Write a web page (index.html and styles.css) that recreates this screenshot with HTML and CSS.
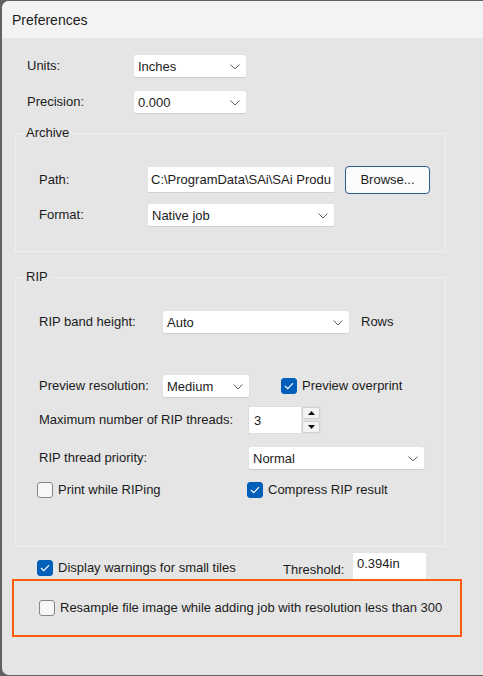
FILE: index.html
```html
<!DOCTYPE html>
<html lang="en">
<head>
	<meta charset="UTF-8">
	<meta name="viewport" content="width=device-width, initial-scale=1.0">
	<title>Preferences</title>

	<link rel="stylesheet" href="styles.css">

</head>
<body>

	<div class="prefs-window">
		<div class="prefs-titlebar">Preferences</div>

		<form class="prefs-content">

			<div class="prefs-top">
				<div class="prefs-row">
					<label class="prefs-label prefs-label-top">Units:</label>
					<div class="prefs-combo prefs-w-114"><span>Inches</span><svg width="10" height="6" viewBox="0 0 10 6"><polyline points="0.5,0.5 5,5 9.5,0.5" fill="none" stroke="#606060" stroke-width="1"/></svg></div>
				</div>
				<div class="prefs-row">
					<label class="prefs-label prefs-label-top">Precision:</label>
					<div class="prefs-combo prefs-w-114"><span>0.000</span><svg width="10" height="6" viewBox="0 0 10 6"><polyline points="0.5,0.5 5,5 9.5,0.5" fill="none" stroke="#606060" stroke-width="1"/></svg></div>
				</div>
			</div>

			<fieldset class="prefs-group prefs-group-archive">
				<legend>Archive</legend>
				<div class="prefs-group-body">
					<div class="prefs-row prefs-row-27">
						<label class="prefs-label prefs-label-archive">Path:</label>
						<div class="prefs-text prefs-w-188"><span class="prefs-clip">C:\ProgramData\SAi\SAi Production</span></div>
						<button type="button" class="prefs-button">Browse...</button>
					</div>
					<div class="prefs-row prefs-gap-10">
						<label class="prefs-label prefs-label-archive">Format:</label>
						<div class="prefs-combo prefs-w-188"><span>Native job</span><svg width="10" height="6" viewBox="0 0 10 6"><polyline points="0.5,0.5 5,5 9.5,0.5" fill="none" stroke="#606060" stroke-width="1"/></svg></div>
					</div>
				</div>
			</fieldset>

			<fieldset class="prefs-group prefs-group-rip">
				<legend>RIP</legend>
				<div class="prefs-group-body">
					<div class="prefs-row">
						<label class="prefs-label prefs-label-rip">RIP band height:</label>
						<div class="prefs-combo prefs-w-188"><span>Auto</span><svg width="10" height="6" viewBox="0 0 10 6"><polyline points="0.5,0.5 5,5 9.5,0.5" fill="none" stroke="#606060" stroke-width="1"/></svg></div>
						<span class="prefs-unit">Rows</span>
					</div>
					<div class="prefs-row prefs-gap-40">
						<label class="prefs-label prefs-label-rip">Preview resolution:</label>
						<div class="prefs-combo prefs-w-88"><span>Medium</span><svg width="10" height="6" viewBox="0 0 10 6"><polyline points="0.5,0.5 5,5 9.5,0.5" fill="none" stroke="#606060" stroke-width="1"/></svg></div>
						<span class="prefs-check prefs-check-overprint"><span class="prefs-box is-checked"><svg width="10" height="8" viewBox="0 0 10 8"><polyline points="1,4 3.8,6.6 9,1.2" fill="none" stroke="#fff" stroke-width="1.2"/></svg></span>Preview overprint</span>
					</div>
					<div class="prefs-row prefs-row-28 prefs-gap-8">
						<label class="prefs-label prefs-label-wide">Maximum number of RIP threads:</label>
						<div class="prefs-spin">
							<div class="prefs-spin-value">3</div>
							<div class="prefs-spin-buttons">
								<span class="prefs-spin-btn"><svg width="7" height="4" viewBox="0 0 7 4"><polygon points="3.5,0 7,4 0,4" fill="#111"/></svg></span>
								<span class="prefs-spin-btn"><svg width="7" height="4" viewBox="0 0 7 4"><polygon points="0,0 7,0 3.5,4" fill="#111"/></svg></span>
							</div>
						</div>
					</div>
					<div class="prefs-row prefs-gap-12">
						<label class="prefs-label prefs-label-wide">RIP thread priority:</label>
						<div class="prefs-combo prefs-w-177"><span>Normal</span><svg width="10" height="6" viewBox="0 0 10 6"><polyline points="0.5,0.5 5,5 9.5,0.5" fill="none" stroke="#606060" stroke-width="1"/></svg></div>
					</div>
					<div class="prefs-row prefs-row-16 prefs-gap-12 prefs-checks">
						<span class="prefs-check prefs-check-col"><span class="prefs-box"></span>Print while RIPing</span>
						<span class="prefs-check"><span class="prefs-box is-checked"><svg width="10" height="8" viewBox="0 0 10 8"><polyline points="1,4 3.8,6.6 9,1.2" fill="none" stroke="#fff" stroke-width="1.2"/></svg></span>Compress RIP result</span>
					</div>
				</div>
			</fieldset>

			<div class="prefs-row prefs-row-26 prefs-tiles">
				<span class="prefs-check prefs-check-tiles"><span class="prefs-box is-checked"><svg width="10" height="8" viewBox="0 0 10 8"><polyline points="1,4 3.8,6.6 9,1.2" fill="none" stroke="#fff" stroke-width="1.2"/></svg></span>Display warnings for small tiles</span>
				<span class="prefs-threshold-label">Threshold:</span>
				<div class="prefs-text prefs-threshold">0.394in</div>
			</div>

			<div class="prefs-highlight">
				<span class="prefs-check"><span class="prefs-box"></span>Resample file image while adding job with resolution less than 300</span>
			</div>

		</form>
	</div>

</body>
</html>
```

FILE: styles.css
```css
body {
	margin: 0;
	background-color: #626262;
	font-family: "Liberation Sans", Arial, sans-serif;
	font-size: 13px;
	line-height: 16px;
	color: #1b1b1b;
}
.prefs-window {
	margin: 1px 0 0 2px;
	height: 674px;
	background-color: #e5e5e5;
	border-radius: 7px 0 0 7px;
	overflow: hidden;
}
.prefs-titlebar {
	display: flex;
	align-items: center;
	height: 37px;
	padding-left: 10px;
	background-color: #f3f3f3;
	font-size: 14px;
}
.prefs-content {
	padding: 16px 0 0 13px;
}
.prefs-top {
	padding-left: 12px;
}

/* rows */
.prefs-row {
	display: flex;
	align-items: center;
	height: 24px;
}
.prefs-row + .prefs-row {
	margin-top: 12px;
}
.prefs-row.prefs-gap-8 { margin-top: 8px; }
.prefs-row.prefs-gap-10 { margin-top: 10px; }
.prefs-row.prefs-gap-12 { margin-top: 12px; }
.prefs-row.prefs-gap-40 { margin-top: 40px; }
.prefs-row-16 { height: 16px; }
.prefs-row-26 { height: 26px; }
.prefs-row-27 { height: 27px; }
.prefs-row-28 { height: 28px; }

.prefs-label-top { width: 106px; }
.prefs-label-archive { width: 108px; }
.prefs-label-rip { width: 123px; }
.prefs-label-wide { width: 209px; }

.prefs-w-88 { width: 88px; }
.prefs-w-114 { width: 114px; }
.prefs-w-177 { width: 177px; }
.prefs-w-188 { width: 188px; }

/* group boxes */
.prefs-group {
	width: 431px;
	margin: 0;
	padding: 0;
	box-sizing: border-box;
	border: 1px solid #efefef;
}
.prefs-group > legend {
	margin-left: 8px;
	padding: 0 2px;
	line-height: 16px;
}
.prefs-group-body {
	padding: 25px 0 0 23px;
}
.prefs-group-archive {
	margin-top: 11px;
}
.prefs-group-archive .prefs-group-body {
	padding-bottom: 24px;
}
.prefs-group-rip {
	margin-top: 17px;
}
.prefs-group-rip .prefs-group-body {
	padding-bottom: 48px;
}

/* controls */
.prefs-combo {
	display: flex;
	align-items: center;
	justify-content: space-between;
	height: 24px;
	padding: 1px 6px 0 4px;
	box-sizing: border-box;
	background-color: #fff;
	border: 1px solid #e3e3e3;
	border-bottom-color: #cfcfcf;
	border-radius: 3px;
}
.prefs-text {
	height: 100%;
	padding: 1px 3px 0;
	box-sizing: border-box;
	display: flex;
	align-items: center;
	background-color: #fff;
	border: 1px solid #e6e6e6;
	border-bottom-color: #d2d2d2;
	white-space: nowrap;
	overflow: hidden;
}
.prefs-clip {
	overflow: hidden;
}
.prefs-button {
	width: 85px;
	height: 28px;
	margin-left: 10px;
	padding: 0;
	font: inherit;
	color: #1b1b1b;
	background-color: #fbfbfb;
	border: 1.5px solid #2b5b93;
	border-radius: 4px;
}
.prefs-unit {
	margin-left: 11px;
}

.prefs-spin {
	display: flex;
	width: 74px;
	height: 28px;
	box-sizing: border-box;
	border: 1px solid #dcdcdc;
}
.prefs-spin-value {
	flex: 1;
	padding: 2px 0 0 5px;
	display: flex;
	align-items: center;
	background-color: #fff;
}
.prefs-spin-buttons {
	display: flex;
	flex-direction: column;
	justify-content: center;
	gap: 2px;
	width: 20px;
	padding: 0 1px;
	box-sizing: border-box;
	background-color: #e4e4e4;
}
.prefs-spin-btn {
	display: flex;
	align-items: center;
	justify-content: center;
	height: 11px;
	background-color: #f3f3f3;
	border: 1px solid #cfcfcf;
	border-radius: 2px;
}

/* checkboxes */
.prefs-check {
	display: inline-flex;
	align-items: center;
	gap: 5px;
	white-space: nowrap;
}
.prefs-box {
	display: inline-flex;
	align-items: center;
	justify-content: center;
	width: 16px;
	height: 16px;
	box-sizing: border-box;
	background-color: #f7f7f7;
	border: 1px solid #858585;
	border-radius: 3px;
}
.prefs-box.is-checked {
	background-color: #005fb8;
	border-color: #005fb8;
}
.prefs-check-overprint {
	margin-left: 31px;
}
.prefs-checks {
	margin-left: -2px;
}
.prefs-check-col {
	width: 210px;
}

/* bottom */
.prefs-tiles {
	margin-top: 6px;
	padding-left: 22px;
}
.prefs-check-tiles {
	width: 246px;
	padding-top: 4px;
}
.prefs-threshold-label {
	width: 70px;
	padding-top: 7px;
}
.prefs-threshold {
	width: 73px;
	align-items: flex-start;
	padding: 3px 4px 0;
	border: none;
}
.prefs-highlight {
	display: flex;
	align-items: center;
	width: 450px;
	height: 58px;
	margin-left: -3px;
	padding-left: 25px;
	box-sizing: border-box;
	border: 2px solid #ff5c12;
}
```
